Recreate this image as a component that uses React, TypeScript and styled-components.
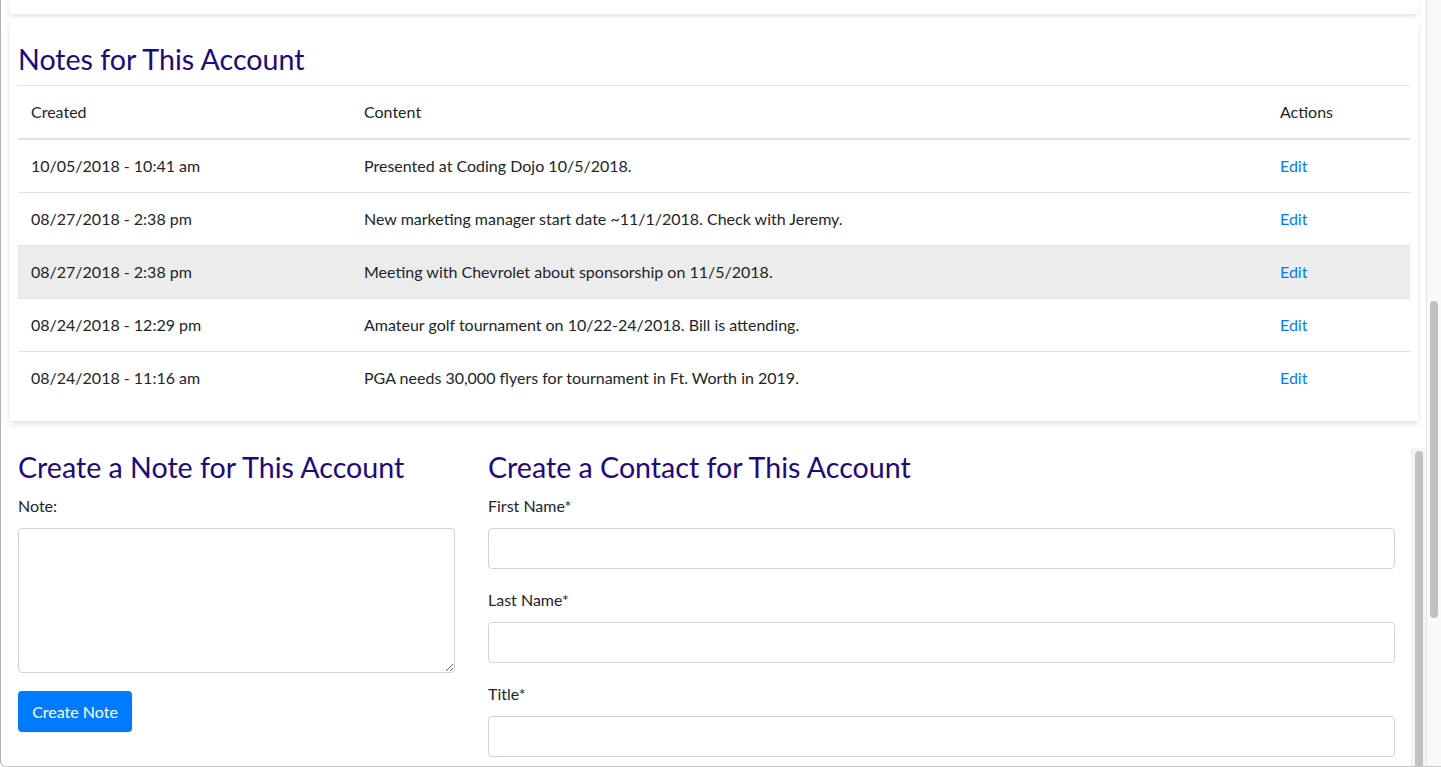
import React from "react";
import styled, { createGlobalStyle } from "styled-components";

const Global = createGlobalStyle`
  html, body { margin: 0; padding: 0; background: #ffffff; }
  body { font-family: Lato, "Liberation Sans", sans-serif; color: #212529; font-size: 16px; }
  * { box-sizing: border-box; }
`;

const Frame = styled.div`
  display: flex;
  height: 767px;
  overflow: hidden;
  border-left: 1px solid #b4b4b4;
  border-bottom: 1px solid #c8c8c8;
  border-bottom-left-radius: 6px;
  background: #fff;
`;

const Main = styled.div`
  flex: 1;
  display: flex;
  flex-direction: column;
  padding-left: 9px;
  min-width: 0;
`;

const TopCard = styled.div`
  height: 14px;
  margin-right: 8px;
  background: #fff;
  box-shadow: 0 2px 5px rgba(0, 0, 0, 0.13);
`;

const Card = styled.section`
  margin: 8px 8px 0 0;
  padding: 18px 8px 17px;
  background: #fff;
  box-shadow: 0 3px 6px rgba(0, 0, 0, 0.12);
`;

const Heading = styled.h2<{ $mb?: number }>`
  margin: 0 0 ${(p) => p.$mb ?? 8}px;
  font-size: 28.6px;
  line-height: 38px;
  font-weight: 400;
  color: #1e0a78;
  white-space: nowrap;
`;

const Table = styled.table`
  width: 100%;
  border-collapse: collapse;
  font-size: 16px;
`;

const Th = styled.th<{ $w?: number }>`
  text-align: left;
  font-weight: 400;
  padding: 14px 12px 14px 13px;
  line-height: 24px;
  border-top: 1px solid #dee2e6;
  border-bottom: 2px solid #dee2e6;
  width: ${(p) => (p.$w ? `${p.$w}px` : "auto")};
`;

const Tr = styled.tr<{ $hover?: boolean }>`
  background: ${(p) => (p.$hover ? "#ececec" : "transparent")};
`;

const Td = styled.td`
  padding: 14px 12px 14px 13px;
  line-height: 24px;
  border-top: 1px solid #dee2e6;
`;

const EditLink = styled.a`
  color: #007bff;
  text-decoration: none;
  cursor: pointer;
`;

const BottomRow = styled.div`
  display: flex;
  margin-top: 27px;
  flex: 1;
  min-height: 0;
`;

const LeftCol = styled.div`
  width: 437px;
  margin-left: 8px;
  flex-shrink: 0;
`;

const RightScroll = styled.div`
  flex: 1;
  display: flex;
  margin-left: 18px;
  min-width: 0;
`;

const RightContent = styled.div`
  flex: 1;
  padding: 0 16px 0 15px;
`;

const InnerTrack = styled.div`
  width: 15px;
  background: #f5f5f5;
  border-left: 1px solid #ececec;
  display: flex;
  justify-content: center;
  padding-top: 3px;
`;

const InnerThumb = styled.div`
  width: 8px;
  height: 400px;
  border-radius: 4px;
  background: #c1c1c1;
`;

const Label = styled.label`
  display: block;
  line-height: 24px;
  margin-bottom: 10px;
  font-size: 16px;
`;

const Group = styled.div`
  margin-bottom: 19px;
`;

const Input = styled.input`
  display: block;
  width: 100%;
  height: 41px;
  border: 1px solid #ced4da;
  border-radius: 4px;
  padding: 6px 12px;
  font: inherit;
  background: #fff;
`;

const TextArea = styled.textarea`
  display: block;
  width: 100%;
  height: 145px;
  border: 1px solid #ced4da;
  border-radius: 4px;
  padding: 6px 12px;
  font: inherit;
  resize: vertical;
  margin-bottom: 18px;
`;

const Button = styled.button`
  height: 41px;
  width: 114px;
  padding: 0;
  border: none;
  border-radius: 4px;
  background: #007bff;
  color: #fff;
  font: inherit;
  font-size: 16px;
  cursor: pointer;
`;

const PageTrack = styled.div`
  width: 15px;
  flex-shrink: 0;
  background: #f9f9f9;
  border-left: 1px solid #e4e4e4;
  padding-left: 3px;
  padding-top: 301px;
`;

const PageThumb = styled.div`
  width: 8px;
  height: 317px;
  border-radius: 4px;
  background: #c1c1c1;
`;

const notes = [
  { created: "10/05/2018 - 10:41 am", content: "Presented at Coding Dojo 10/5/2018." },
  { created: "08/27/2018 - 2:38 pm", content: "New marketing manager start date ~11/1/2018. Check with Jeremy." },
  { created: "08/27/2018 - 2:38 pm", content: "Meeting with Chevrolet about sponsorship on 11/5/2018.", hover: true },
  { created: "08/24/2018 - 12:29 pm", content: "Amateur golf tournament on 10/22-24/2018. Bill is attending." },
  { created: "08/24/2018 - 11:16 am", content: "PGA needs 30,000 flyers for tournament in Ft. Worth in 2019." },
];

export default function App() {
  return (
    <>
      <Global />
      <Frame>
        <Main>
          <TopCard />
          <Card>
            <Heading $mb={7}>Notes for This Account</Heading>
            <Table>
              <thead>
                <tr>
                  <Th $w={333}>Created</Th>
                  <Th>Content</Th>
                  <Th $w={143}>Actions</Th>
                </tr>
              </thead>
              <tbody>
                {notes.map((n, i) => (
                  <Tr key={i} $hover={n.hover}>
                    <Td>{n.created}</Td>
                    <Td>{n.content}</Td>
                    <Td>
                      <EditLink>Edit</EditLink>
                    </Td>
                  </Tr>
                ))}
              </tbody>
            </Table>
          </Card>
          <BottomRow>
            <LeftCol>
              <Heading>Create a Note for This Account</Heading>
              <Label>Note:</Label>
              <TextArea />
              <Button>Create Note</Button>
            </LeftCol>
            <RightScroll>
              <RightContent>
                <Heading>Create a Contact for This Account</Heading>
                <Group>
                  <Label>First Name*</Label>
                  <Input />
                </Group>
                <Group>
                  <Label>Last Name*</Label>
                  <Input />
                </Group>
                <Group>
                  <Label>Title*</Label>
                  <Input />
                </Group>
              </RightContent>
              <InnerTrack>
                <InnerThumb />
              </InnerTrack>
            </RightScroll>
          </BottomRow>
        </Main>
        <PageTrack>
          <PageThumb />
        </PageTrack>
      </Frame>
    </>
  );
}
